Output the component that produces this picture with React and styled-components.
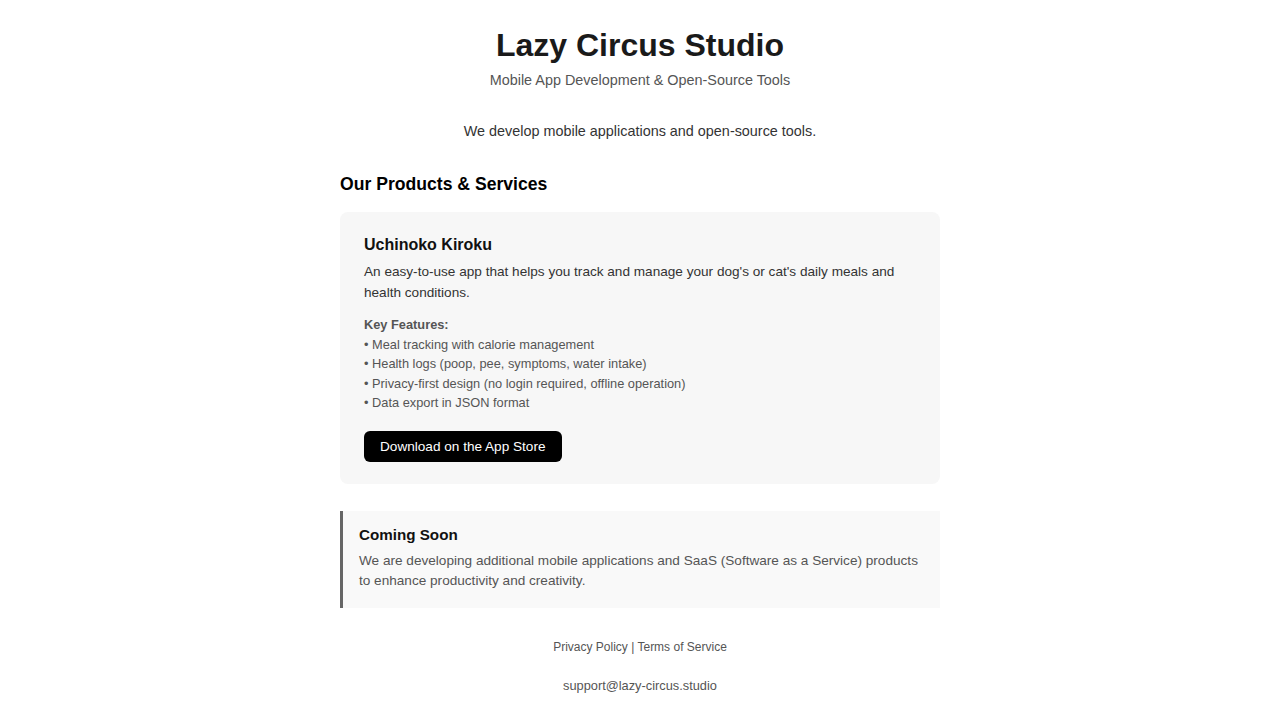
import styled, { createGlobalStyle } from "styled-components";

const GlobalStyle = createGlobalStyle`
    html, body {
        margin: 0;
        padding: 0;
        background: #ffffff;
        font-family: "Liberation Sans", Arial, sans-serif;
    }
    * {
        box-sizing: border-box;
    }
`;

const Page = styled.div`
    width: 600px;
    margin: 0 auto;
    padding-top: 27px;
    color: #333;
`;

const Header = styled.header`
    text-align: center;
`;

const Title = styled.h1`
    margin: 0;
    font-size: 32px;
    font-weight: bold;
    color: #1a1a1a;
    line-height: 37px;
`;

const Subtitle = styled.p`
    margin: 8px 0 0;
    font-size: 14.4px;
    line-height: 16px;
    color: #555;
`;

const Intro = styled.p`
    margin: 35px 0 0;
    text-align: center;
    font-size: 14.4px;
    line-height: 16px;
    color: #333;
`;

const SectionTitle = styled.h2`
    margin: 35px 0 0;
    font-size: 17.6px;
    line-height: 20px;
    font-weight: bold;
    color: #000;
`;

const ProductCard = styled.section`
    margin-top: 18px;
    background: #f7f7f7;
    border-radius: 8px;
    padding: 24px 24px 22px;
`;

const ProductName = styled.h3`
    margin: 0;
    font-size: 16px;
    line-height: 18px;
    font-weight: bold;
    color: #111;
`;

const Description = styled.p`
    margin: 7px 0 0;
    font-size: 13.6px;
    line-height: 21px;
    color: #333;
`;

const Features = styled.div`
    margin-top: 12px;
    font-size: 12.8px;
    line-height: 19.5px;
    color: #555;

    strong {
        font-weight: bold;
    }
`;

const FeatureLine = styled.div``;

const StoreButton = styled.a`
    margin-top: 18px;
    display: inline-flex;
    align-items: center;
    height: 31px;
    padding: 0 16px;
    background: #000;
    color: #fff;
    font-size: 13.6px;
    border-radius: 6px;
    text-decoration: none;
`;

const ComingSoon = styled.section`
    margin-top: 27px;
    background: #f9f9f9;
    border-left: 3px solid #666;
    padding: 15px 16px 17px;
`;

const ComingTitle = styled.h3`
    margin: 0;
    font-size: 15.2px;
    line-height: 18px;
    font-weight: bold;
    color: #111;
`;

const ComingText = styled.p`
    margin: 7px 0 0;
    font-size: 13.6px;
    line-height: 20px;
    color: #555;
`;

const Footer = styled.footer`
    margin-top: 32px;
    text-align: center;
    color: #555;
`;

const FooterLinks = styled.div`
    font-size: 12px;
    line-height: 14px;

    a {
        color: #555;
        text-decoration: none;
    }
`;

const Contact = styled.div`
    margin-top: 24px;
    font-size: 12.8px;
    line-height: 15px;
`;

const features = [
    "Meal tracking with calorie management",
    "Health logs (poop, pee, symptoms, water intake)",
    "Privacy-first design (no login required, offline operation)",
    "Data export in JSON format",
];

export default function App() {
    return (
        <>
            <GlobalStyle />
            <Page>
                <Header>
                    <Title>Lazy Circus Studio</Title>
                    <Subtitle>Mobile App Development &amp; Open-Source Tools</Subtitle>
                </Header>

                <Intro>We develop mobile applications and open-source tools.</Intro>

                <SectionTitle>Our Products &amp; Services</SectionTitle>

                <ProductCard>
                    <ProductName>Uchinoko Kiroku</ProductName>
                    <Description>
                        An easy-to-use app that helps you track and manage your dog's or cat's daily meals and
                        health conditions.
                    </Description>
                    <Features>
                        <strong>Key Features:</strong>
                        {features.map((f) => (
                            <FeatureLine key={f}>• {f}</FeatureLine>
                        ))}
                    </Features>
                    <StoreButton href="#">Download on the App Store</StoreButton>
                </ProductCard>

                <ComingSoon>
                    <ComingTitle>Coming Soon</ComingTitle>
                    <ComingText>
                        We are developing additional mobile applications and SaaS (Software as a Service) products
                        to enhance productivity and creativity.
                    </ComingText>
                </ComingSoon>

                <Footer>
                    <FooterLinks>
                        <a href="#">Privacy Policy</a> | <a href="#">Terms of Service</a>
                    </FooterLinks>
                    <Contact>support@lazy-circus.studio</Contact>
                </Footer>
            </Page>
        </>
    );
}
